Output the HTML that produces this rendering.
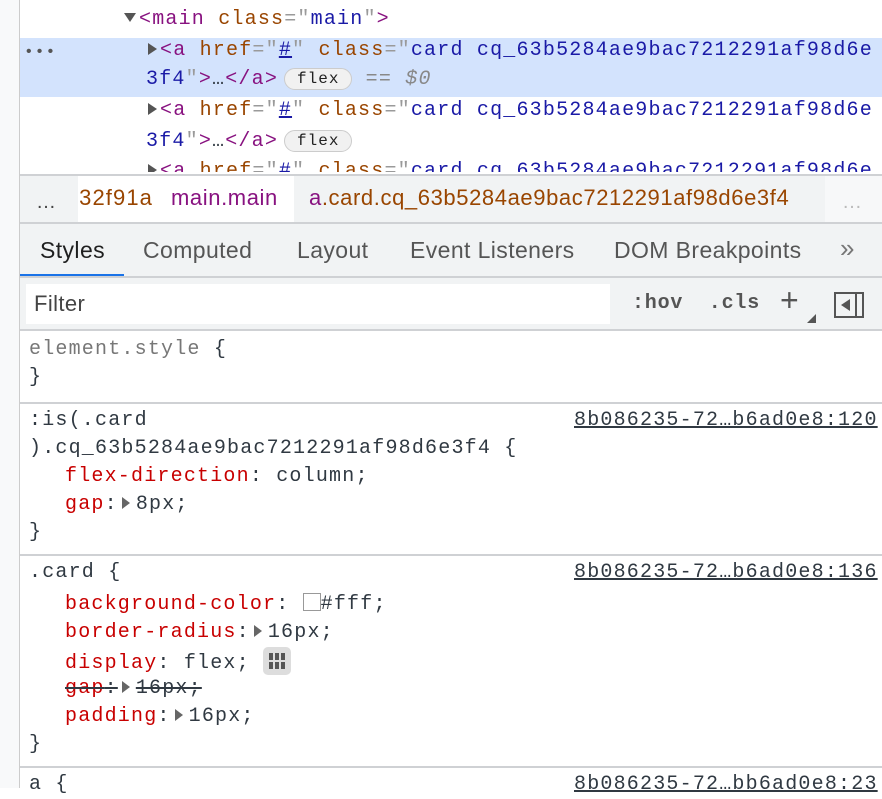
<!DOCTYPE html>
<html><head><style>
body{margin:0;width:882px;height:788px;overflow:hidden;background:#fff;position:relative;font-family:"Liberation Mono",monospace;font-size:20px;letter-spacing:1.2px;color:#303942}
.a{position:absolute;white-space:pre;line-height:28px}
.s{font-family:"Liberation Sans",sans-serif;letter-spacing:0.4px}
.g{position:absolute;left:0;top:0;width:19px;height:788px;background:#f8f9fa;border-right:1px solid #ccc}
.hl{position:absolute;left:20px;right:0;background:#d3e3fd}
.hr{position:absolute;left:20px;right:0;height:2px;background:#cfd1d4}
.t{color:#881280}.at{color:#994500}.v{color:#1a1aa6}.q{color:#9a9a9a}
.p{color:#c80000}
.tri{display:inline-block;width:0;height:0;border-left:9px solid #555;border-top:6px solid transparent;border-bottom:6px solid transparent;margin-right:3px}
.tri2{display:inline-block;width:0;height:0;border-left:8px solid #666;border-top:6px solid transparent;border-bottom:6px solid transparent;margin:0 6px 0 4px}
.pill{display:inline-block;border:1px solid #ccc;background:#f1f1f1;border-radius:11px;font-size:16px;letter-spacing:1px;line-height:20px;padding:0 12px;color:#222;vertical-align:1px;margin-left:6px}
.u{text-decoration:underline}
</style></head><body>
<div class="g"></div>
<div class="hl" style="top:38px;height:59px"></div>
<div class="a" style="left:24px;top:38px;color:#555;font-size:16px">•••</div>
<div class="a" style="left:124px;top:6px"><span style="display:inline-block;border-top:9px solid #555;border-left:6px solid transparent;border-right:6px solid transparent;margin-right:3px;vertical-align:2px"></span><span class="t">&lt;main</span> <span class="at">class</span><span class="q">="</span><span class="v">main</span><span class="q">"</span><span class="t">&gt;</span></div>
<div class="a" style="left:148px;top:37px"><span class="tri"></span><span class="t">&lt;a</span> <span class="at">href</span><span class="q">="</span><span class="v" style="text-decoration:underline">#</span><span class="q">"</span> <span class="at">class</span><span class="q">="</span><span class="v">card cq_63b5284ae9bac7212291af98d6e</span></div>
<div class="a" style="left:146px;top:66px"><span class="v">3f4</span><span class="q">"</span><span class="t">&gt;</span>…<span class="t">&lt;/a&gt;</span><span class="pill">flex</span> <span style="color:#888">== <i>$0</i></span></div>
<div class="a" style="left:148px;top:97px"><span class="tri"></span><span class="t">&lt;a</span> <span class="at">href</span><span class="q">="</span><span class="v" style="text-decoration:underline">#</span><span class="q">"</span> <span class="at">class</span><span class="q">="</span><span class="v">card cq_63b5284ae9bac7212291af98d6e</span></div>
<div class="a" style="left:146px;top:128px"><span class="v">3f4</span><span class="q">"</span><span class="t">&gt;</span>…<span class="t">&lt;/a&gt;</span><span class="pill">flex</span></div>
<div class="a" style="left:148px;top:158px;height:14px;overflow:hidden"><span class="tri"></span><span class="t">&lt;a</span> <span class="at">href</span><span class="q">="</span><span class="v">#</span><span class="q">"</span> <span class="at">class</span><span class="q">="</span><span class="v">card cq_63b5284ae9bac7212291af98d6e</span></div>
<!-- breadcrumb -->
<div style="position:absolute;left:20px;right:0;top:174px;height:48px;background:#fff;border-top:2px solid #cfd1d4"></div>
<div style="position:absolute;left:20px;width:58px;top:176px;height:46px;background:#f1f3f4"></div>
<div style="position:absolute;left:294px;width:856px;top:176px;height:46px;background:#f1f3f4"></div>
<div style="position:absolute;left:825px;right:0;top:176px;height:46px;background:#f7f8f9"></div>
<div class="a s" style="left:36px;top:188px;color:#444;font-size:20px">…</div>
<div class="a s" style="left:842px;top:188px;color:#bbb;font-size:20px">…</div>
<div class="a s" style="left:73px;top:184px;font-size:22px;letter-spacing:1.1px;width:80px;overflow:hidden;direction:rtl"><span class="at">32f91a</span></div>
<div class="a s" style="left:171px;top:184px;font-size:22px;letter-spacing:0.6px"><span class="t">main.main</span></div>
<div class="a s" style="left:309px;top:184px;font-size:22px;letter-spacing:0.6px"><span class="t">a</span><span class="at">.card.cq_63b5284ae9bac7212291af98d6e3f4</span></div>
<!-- tabs -->
<div style="position:absolute;left:20px;right:0;top:222px;height:54px;background:#f1f3f4;border-top:2px solid #cfd1d4"></div>
<div style="position:absolute;left:20px;width:104px;top:274px;height:3px;background:#1a73e8"></div>
<div class="hr" style="top:276px"></div>
<div class="a s" style="top:236px;left:40px;font-size:23px;color:#1f1f1f">Styles</div>
<div class="a s" style="top:236px;left:143px;font-size:23px;color:#555">Computed</div>
<div class="a s" style="top:236px;left:297px;font-size:23px;color:#555">Layout</div>
<div class="a s" style="top:236px;left:410px;font-size:23px;color:#555">Event Listeners</div>
<div class="a s" style="top:236px;left:614px;font-size:23px;color:#555">DOM Breakpoints</div>
<div class="a s" style="top:234px;left:840px;font-size:26px;color:#777">»</div>
<!-- filter -->
<div style="position:absolute;left:20px;right:0;top:278px;height:52px;background:#f1f3f4"></div>
<div style="position:absolute;left:26px;width:584px;top:284px;height:40px;background:#fff"></div>
<div class="a s" style="left:34px;top:290px;font-size:22px;color:#444">Filter</div>
<div class="a" style="left:632px;top:290px;font-weight:bold;color:#555;letter-spacing:0.8px">:hov  .cls</div>
<div class="a s" style="left:780px;top:286px;font-size:32px;color:#555">+</div>
<div style="position:absolute;left:807px;top:314px;width:0;height:0;border-bottom:9px solid #555;border-left:9px solid transparent"></div>
<div style="position:absolute;left:834px;top:292px;width:30px;height:26px;border:2px solid #555;box-sizing:border-box"></div>
<div style="position:absolute;left:855px;top:292px;width:2px;height:26px;background:#555"></div>
<div style="position:absolute;left:841px;top:299px;border-right:9px solid #555;border-top:6px solid transparent;border-bottom:6px solid transparent"></div>
<div class="hr" style="top:329px"></div>
<!-- rules -->
<div class="a" style="left:29px;top:336px"><span style="color:#777">element.style</span> {</div>
<div class="a" style="left:29px;top:364px">}</div>
<div class="hr" style="top:402px"></div>
<div class="a" style="left:29px;top:407px">:is(.card</div>
<div class="a" style="left:29px;top:435px">).cq_63b5284ae9bac7212291af98d6e3f4 {</div>
<div class="a" style="left:65px;top:463px"><span class="p">flex-direction</span>: column;</div>
<div class="a" style="left:65px;top:491px"><span class="p">gap</span>:<span class="tri2"></span>8px;</div>
<div class="a" style="left:29px;top:519px">}</div>
<div class="a u" style="left:574px;top:407px">8b086235-72…b6ad0e8:120</div>
<div class="hr" style="top:554px"></div>
<div class="a" style="left:29px;top:559px">.card {</div>
<div class="a u" style="left:574px;top:559px">8b086235-72…b6ad0e8:136</div>
<div class="a" style="left:65px;top:591px"><span class="p">background-color</span>: <span style="display:inline-block;width:16px;height:16px;border:1px solid #999;background:#fff;vertical-align:-2px"></span>#fff;</div>
<div class="a" style="left:65px;top:619px"><span class="p">border-radius</span>:<span class="tri2"></span>16px;</div>
<div class="a" style="left:65px;top:647px"><span class="p">display</span>: flex; <span style="display:inline-block;width:28px;height:28px;border-radius:5px;background:#ddd;vertical-align:-7px;position:relative"><span style="position:absolute;left:6px;top:6px;width:16px;height:16px;background:repeating-linear-gradient(90deg,#555 0 4px,transparent 4px 6px)"></span><span style="position:absolute;left:5px;top:13px;width:18px;height:2px;background:#ddd"></span></span></div>
<div class="a" style="left:65px;top:675px"><span style="text-decoration:line-through"><span class="p">gap</span>:<span class="tri2"></span>16px;</span></div>
<div class="a" style="left:65px;top:703px"><span class="p">padding</span>:<span class="tri2"></span>16px;</div>
<div class="a" style="left:29px;top:731px">}</div>
<div class="hr" style="top:766px"></div>
<div class="a" style="left:29px;top:771px">a {</div>
<div class="a u" style="left:574px;top:771px">8b086235-72…bb6ad0e8:23</div>
</body></html>
